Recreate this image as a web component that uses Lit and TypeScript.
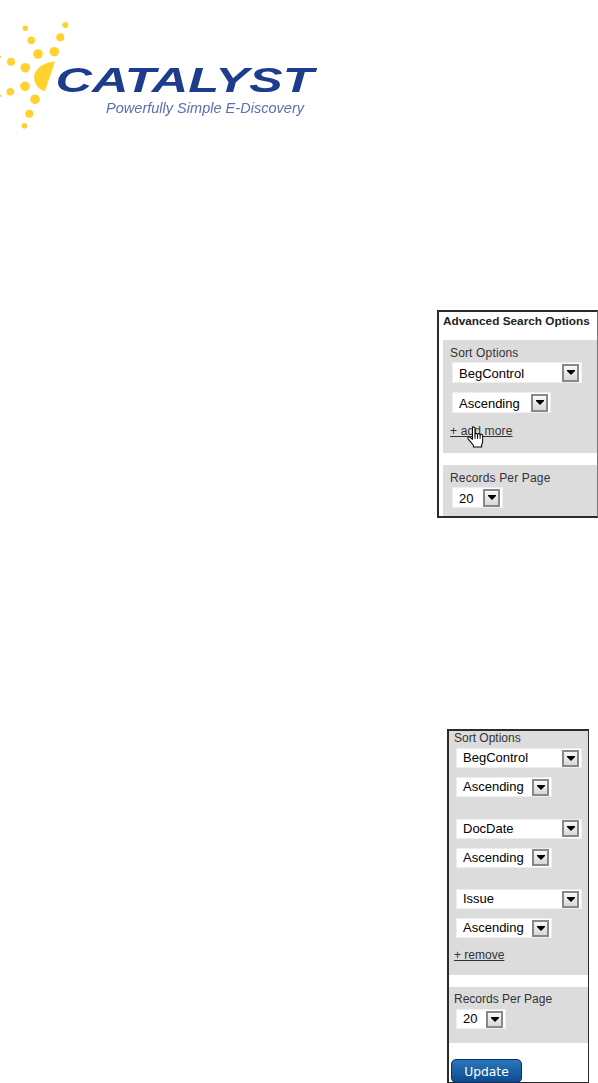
import { LitElement, html, css } from "lit";
import { customElement } from "lit/decorators.js";

const arrow = html`<svg class="arr" width="8" height="5" viewBox="0 0 8 5"><path d="M0 0H8V1L4 5L0 1Z" fill="#000"/></svg>`;

const sel = (label: string, size: string) => html`
  <div class="sel ${size}"><span class="val">${label}</span><span class="btn">${arrow}</span></div>`;

const logo = html`
  <svg class="logo" width="330" height="140" viewBox="0 0 330 140">
    <defs><filter id="soft" x="-5%" y="-5%" width="110%" height="110%"><feGaussianBlur stdDeviation="0.7"/></filter></defs>
    <g filter="url(#soft)">
      <g fill="#ffd22e">
        <circle cx="25.3" cy="28.3" r="2.8"/><circle cx="65.3" cy="25" r="3"/>
        <circle cx="31.3" cy="40.3" r="3.8"/><circle cx="60.3" cy="37.3" r="4"/>
        <circle cx="38" cy="54" r="4.8"/><circle cx="54.3" cy="51.7" r="4.8"/>
        <circle cx="11" cy="61.7" r="4"/><circle cx="25.3" cy="67.7" r="4.8"/>
        <circle cx="25" cy="86.3" r="4.8"/><circle cx="10.3" cy="91.7" r="3.8"/>
        <circle cx="35" cy="99.3" r="4.8"/><circle cx="29.3" cy="113.7" r="4"/>
        <circle cx="24.3" cy="125.7" r="2.8"/>
        <circle cx="0.5" cy="56.7" r="1"/><circle cx="0.5" cy="96" r="1"/>
        <path d="M55 61.5C43 62 34 70 34 77C34 84 39 90 45 91Z"/>
      </g>
      <text class="brand" x="55.5" y="92" textLength="258" lengthAdjust="spacingAndGlyphs">CATALYST</text>
      <text class="tag" x="106" y="112.5" textLength="198" lengthAdjust="spacingAndGlyphs">Powerfully Simple E-Discovery</text>
    </g>
  </svg>`;

const hand = html`
  <svg class="hand" width="19" height="22" viewBox="0 0 17 21.5">
    <path d="M5.5 2C5.5 .6 8 .6 8 2V8C8 7 10.5 7 10.5 8.2C10.5 7.2 13 7.2 13 8.6C13 7.8 15.5 7.8 15.5 9.4V14.5C15.5 16.5 15 17.5 14.5 18.5V20.5H6.5V19C5.5 17.5 3.5 15 1.2 12.5C.4 11.2 1.8 10 3 10.8L5.5 13Z" fill="#fff" stroke="#000" stroke-width="1" stroke-linejoin="round"/>
    <path d="M8 8V12.5M10.5 8.2V12.5M13 8.6V12.5" stroke="#000" stroke-width="1" fill="none"/>
  </svg>`;

@customElement("app-root")
export class AppRoot extends LitElement {
  static styles = css`
    :host { display: block; width: 598px; height: 1083px; overflow: hidden; background: #fff; font-family: "Liberation Sans", Arial, sans-serif; font-size: 12px; color: #333; }
    .logo { display: block; }
    .brand { font: italic bold 35px "Liberation Sans", Arial, sans-serif; fill: #1f3c8c; }
    .tag { font: italic 14px "Liberation Sans", Arial, sans-serif; fill: #5a6fb0; }

    .panel { box-sizing: border-box; background: #fff; border: 0 solid #2b2b2b; }
    .p1 { margin: 170px 0 0 437px; width: 161px; height: 208px; border-width: 2px 1px 2px 2px; border-right-color: #777; }
    .title { height: 28px; padding-left: 4px; font-weight: bold; font-size: 11.8px; color: #222; line-height: 18px; }
    .sec { background: #dcdcdc; display: flex; flex-direction: column; align-items: flex-start; }
    .p1 .sec { margin-left: 4px; padding-left: 7px; letter-spacing: .15px; }
    .p1 .a { height: 113px; padding-top: 6px; box-sizing: border-box; }
    .p1 .b { margin-top: 12px; height: 51px; padding-top: 6px; box-sizing: border-box; }
    .lbl { line-height: 14px; height: 16px; }
    .sel { box-sizing: border-box; background: #fff; border: 1px solid #eee; height: 21px; margin-left: 2px; display: flex; align-items: center; justify-content: space-between; padding-right: 2px; font-size: 13px; color: #000; letter-spacing: 0; }
    .val { padding: 1px 0 0 6px; }
    .btn { box-sizing: border-box; width: 17px; height: 18px; border: 2px solid #888; background: linear-gradient(#f8f8f8, #d8d8d8); display: flex; align-items: center; justify-content: center; }
    .arr { display: block; }
    .long { width: 130px; }
    .mid { width: 99px; }
    .short { width: 51px; }
    .p1 .sel + .sel { margin-top: 9px; }
    .link { position: relative; color: #333; text-decoration: underline; display: block; line-height: 14px; }
    .p1 .link { margin-top: 11px; }
    .hand { position: absolute; left: 16px; top: 2px; }

    .p2 { margin: 211px 0 0 447px; width: 142px; height: 354px; border-width: 2px 1.5px 1px 2px; }
    .p2 .sec { padding-left: 5px; }
    .p2 .a { height: 244px; box-sizing: border-box; }
    .p2 .lbl { height: 16px; line-height: 15px; }
    .p2 .sel { height: 20px; margin-top: 1px; }
    .p2 .val { padding: 0 0 1px 6px; }
    .p2 .btn { height: 17px; }
    .p2 .long { width: 126px; }
    .p2 .mid { width: 96px; }
    .p2 .short { width: 50px; }
    .p2 .pair { display: flex; flex-direction: column; align-items: flex-start; margin-bottom: 20.5px; }
    .p2 .pair .sel + .sel { margin-top: 9px; }
    .p2 .pair:last-of-type { margin-bottom: 0; }
    .p2 .link { margin-top: 10px; }
    .p2 .b { margin-top: 12px; height: 56px; padding-top: 5px; box-sizing: border-box; }
    .update { box-sizing: border-box; display: block; margin: 16px 0 0 2px; width: 71px; height: 24px; border: 1px solid #0d2f5c; border-radius: 5px; background: linear-gradient(#2a77bb, #0e4a8e); color: #fff; font: 12.3px "DejaVu Sans", Verdana, sans-serif; padding: 0; line-height: 24px; text-align: center; }
  `;

  render() {
    return html`
      ${logo}
      <section class="panel p1">
        <div class="title">Advanced Search Options</div>
        <div class="sec a">
          <div class="lbl">Sort Options</div>
          ${sel("BegControl", "long")}
          ${sel("Ascending", "mid")}
          <span class="link">+ add more${hand}</span>
        </div>
        <div class="sec b">
          <div class="lbl">Records Per Page</div>
          ${sel("20", "short")}
        </div>
      </section>
      <section class="panel p2">
        <div class="sec a">
          <div class="lbl">Sort Options</div>
          <div class="pair">${sel("BegControl", "long")}${sel("Ascending", "mid")}</div>
          <div class="pair">${sel("DocDate", "long")}${sel("Ascending", "mid")}</div>
          <div class="pair">${sel("Issue", "long")}${sel("Ascending", "mid")}</div>
          <span class="link">+ remove</span>
        </div>
        <div class="sec b">
          <div class="lbl">Records Per Page</div>
          ${sel("20", "short")}
        </div>
        <button class="update">Update</button>
      </section>
    `;
  }
}
